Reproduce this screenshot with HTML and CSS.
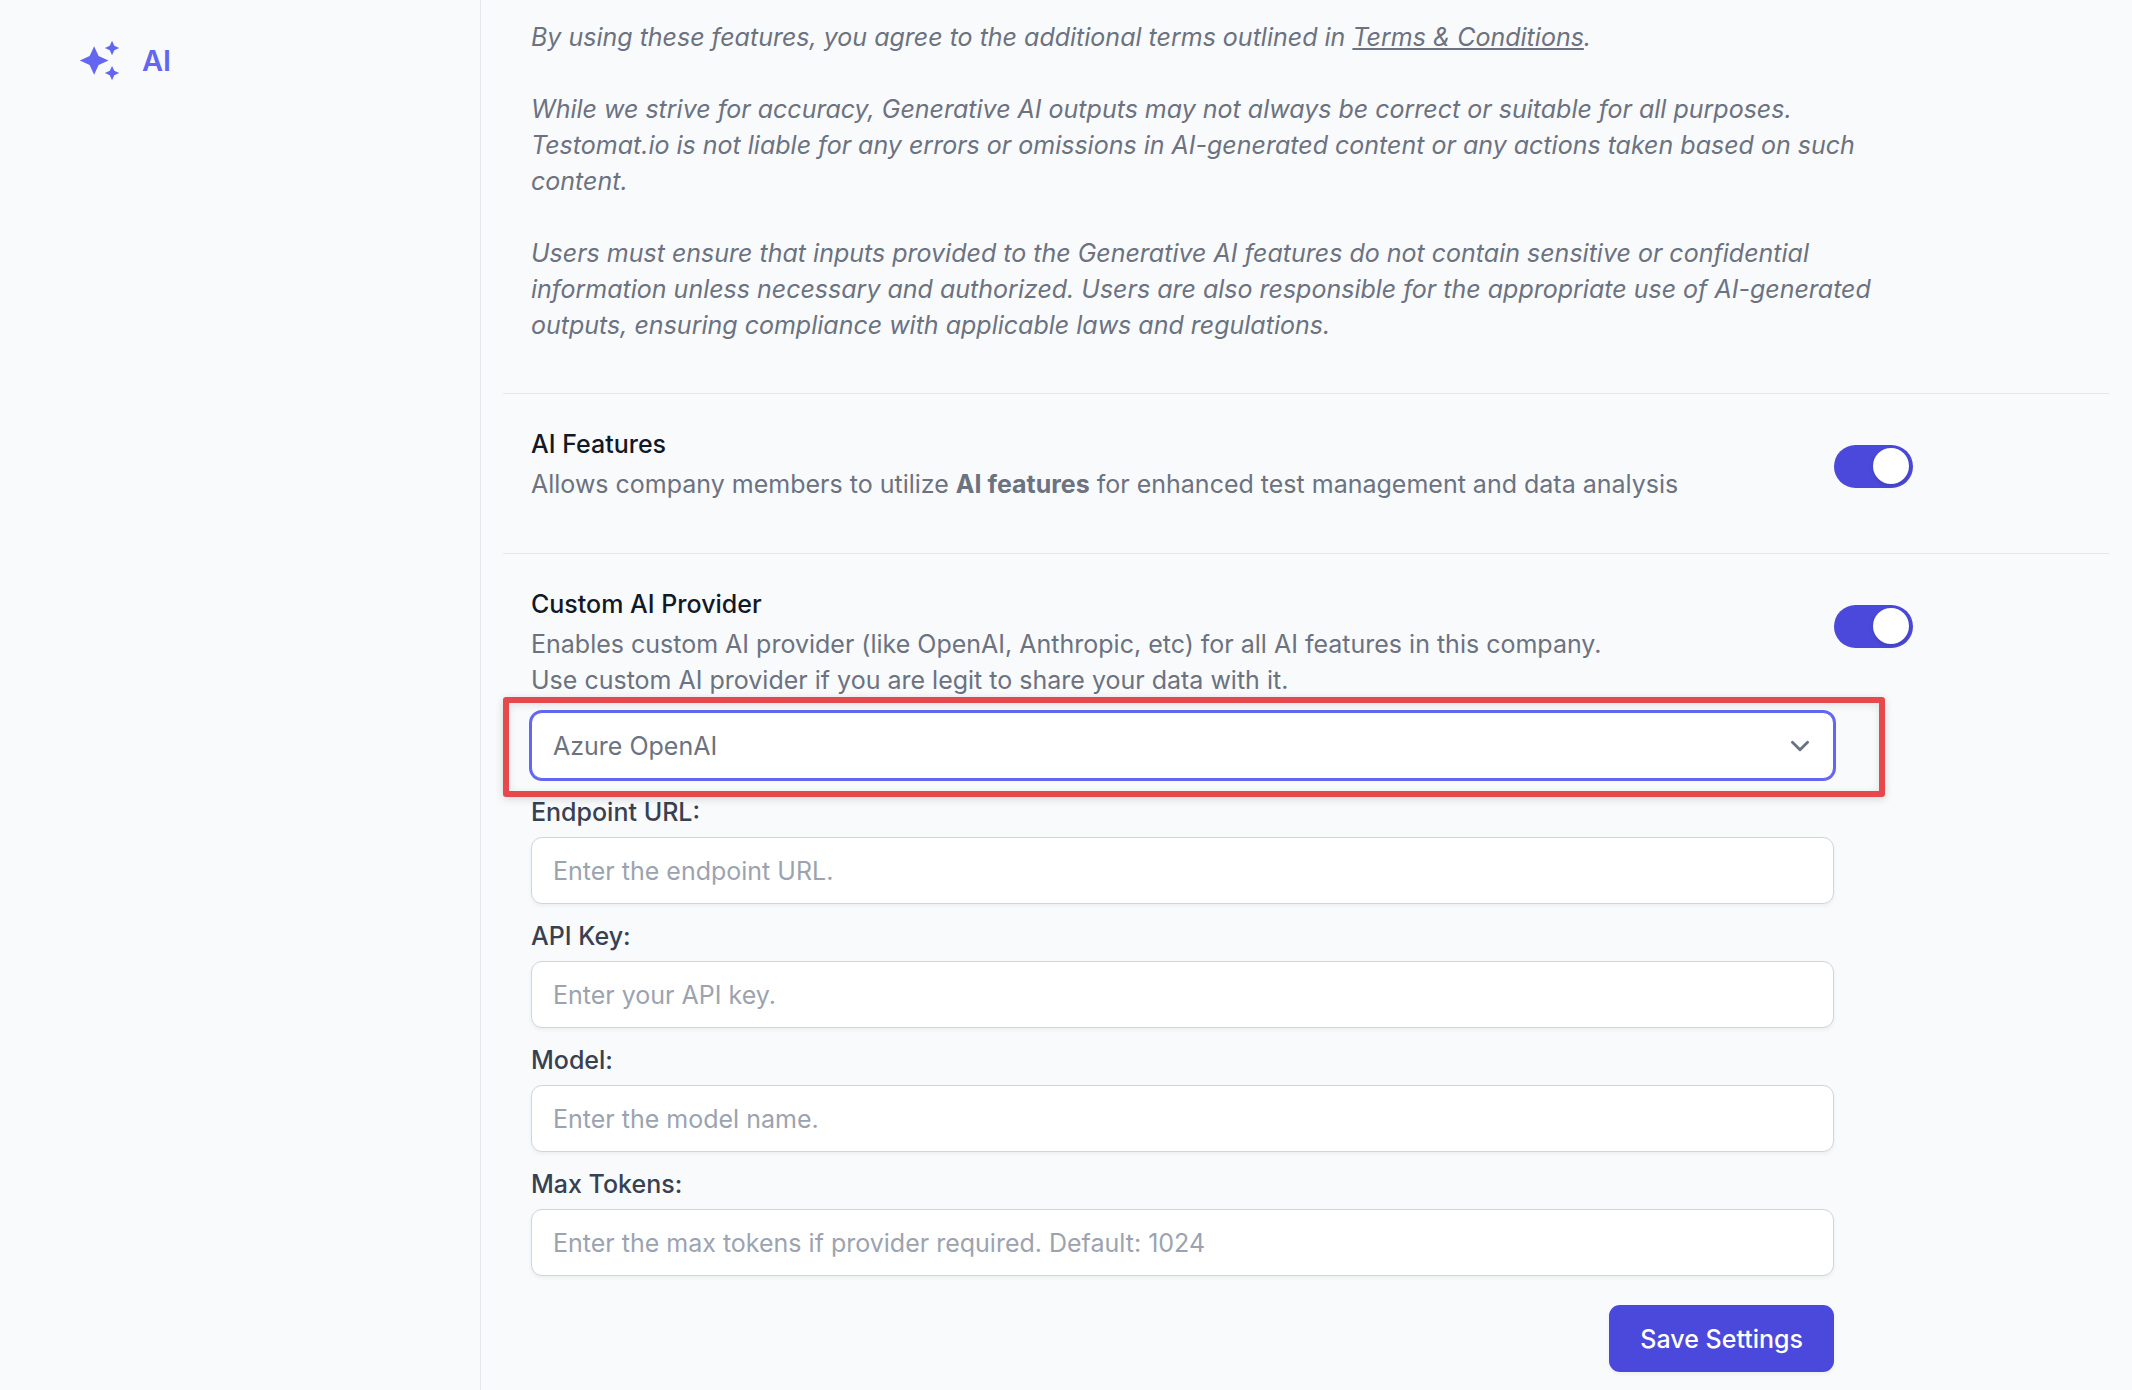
FILE: index.html
```html
<!DOCTYPE html>
<html lang="en">
<head>
    <meta charset="UTF-8">
    <meta name="viewport" content="width=device-width, initial-scale=1.0">
    <title>AI Settings</title>
    <link rel="stylesheet" href="styles.css">
</head>
<body>
    <div class="layout">
        <!-- Side menu -->
        <nav class="sidebar">
            <a href="#" class="nav-link">
                <svg class="nav-icon" viewBox="0 0 24 24" fill="currentColor" aria-hidden="true">
                    <path d="M19,1L17.74,3.75L15,5L17.74,6.26L19,9L20.25,6.26L23,5L20.25,3.75M9,4L6.5,9.5L1,12L6.5,14.5L9,20L11.5,14.5L17,12L11.5,9.5M19,15L17.74,17.74L15,19L17.74,20.25L19,23L20.25,20.25L23,19L20.25,17.74"/>
                </svg>
                <span>AI</span>
            </a>
        </nav>

        <main class="content">
            <section class="terms">
                <p>By using these features, you agree to the additional terms outlined in <a href="#">Terms &amp; Conditions</a>.</p>
                <p>While we strive for accuracy, Generative AI outputs may not always be correct or suitable for all purposes. Testomat.io is not liable for any errors or omissions in AI-generated content or any actions taken based on such content.</p>
                <p>Users must ensure that inputs provided to the Generative AI features do not contain sensitive or confidential information unless necessary and authorized. Users are also responsible for the appropriate use of AI-generated outputs, ensuring compliance with applicable laws and regulations.</p>
            </section>

            <section class="setting">
                <div class="setting-body">
                    <label class="setting-title" for="aiFeatures">AI Features</label>
                    <p>Allows company members to utilize <strong>AI features</strong> for enhanced test management and data analysis</p>
                </div>
                <input type="checkbox" class="toggle" id="aiFeatures" checked>
            </section>

            <section class="setting">
                <div class="setting-body">
                    <label class="setting-title" for="customProvider">Custom AI Provider</label>
                    <p>Enables custom AI provider (like OpenAI, Anthropic, etc) for all AI features in this company.<br>Use custom AI provider if you are legit to share your data with it.</p>

                    <form class="provider-form">
                        <div class="select-wrap">
                            <select id="provider" name="provider" aria-label="AI provider">
                                <option>Azure OpenAI</option>
                            </select>
                            <svg class="chevron" viewBox="0 0 20 20" fill="none" stroke="currentColor" aria-hidden="true">
                                <path d="M6 8l4 4 4-4" stroke-width="1.5" stroke-linecap="round" stroke-linejoin="round"/>
                            </svg>
                        </div>
                        <div class="form-group">
                            <label for="endpoint">Endpoint URL:</label>
                            <input type="text" id="endpoint" name="endpoint" placeholder="Enter the endpoint URL.">
                        </div>
                        <div class="form-group">
                            <label for="apiKey">API Key:</label>
                            <input type="text" id="apiKey" name="apiKey" placeholder="Enter your API key.">
                        </div>
                        <div class="form-group">
                            <label for="model">Model:</label>
                            <input type="text" id="model" name="model" placeholder="Enter the model name.">
                        </div>
                        <div class="form-group">
                            <label for="maxTokens">Max Tokens:</label>
                            <input type="text" id="maxTokens" name="maxTokens" placeholder="Enter the max tokens if provider required. Default: 1024">
                        </div>
                        <div class="button-container">
                            <button type="button">Save Settings</button>
                        </div>
                    </form>
                </div>
                <input type="checkbox" class="toggle" id="customProvider" checked>
            </section>
        </main>
    </div>
</body>
</html>
```
FILE: styles.css
```css
* {
    box-sizing: border-box;
}
body {
    margin: 0;
    font-family: Inter, sans-serif;
    font-size: 25px;
    line-height: 36px;
    color: #6b7280;
    background-color: #f9fafc;
}
p {
    margin: 0;
}
.layout {
    display: flex;
    min-height: 100vh;
}

/* Side menu */
.sidebar {
    flex: 0 0 481px;
    padding: 39px 78px;
    border-right: 1px solid #e5e7eb;
}
.nav-link {
    display: flex;
    align-items: center;
    gap: 21px;
    font-size: 29px;
    font-weight: 600;
    color: #6366f1;
    text-decoration: none;
}
.nav-icon {
    width: 43px;
    height: 43px;
}

/* Page content */
.content {
    flex: 1;
    min-width: 0;
    padding: 0 23px 0 22px;
}
.terms {
    display: flex;
    flex-direction: column;
    gap: 36px;
    padding: 19px 196px 50px 28px;
    font-style: italic;
}
.terms a {
    color: inherit;
}
.setting {
    display: flex;
    align-items: flex-start;
    padding: 32px 196px 51px 28px;
    border-top: 1px solid #e5e7eb;
}
.setting:last-child {
    padding-bottom: 18px;
}
.setting-body {
    flex: 1;
    min-width: 0;
}
.setting-title {
    display: block;
    margin-bottom: 4px;
    font-weight: 500;
    color: #111827;
}

/* Toggle switch */
.toggle {
    appearance: none;
    display: flex;
    justify-content: flex-end;
    flex-shrink: 0;
    width: 79px;
    height: 43px;
    margin: 19px 0 0;
    padding: 3px 4px;
    border-radius: 22px;
    background-color: #4b49db;
    cursor: pointer;
}
.toggle::before {
    content: "";
    width: 36px;
    height: 36px;
    border-radius: 50%;
    background-color: #fff;
    box-shadow: 0 2px 4px rgba(0, 0, 0, 0.15);
}
.toggle:not(:checked) {
    justify-content: flex-start;
    background-color: #e5e7eb;
}

/* Provider form */
.provider-form {
    margin-top: 14px;
}
.select-wrap {
    position: relative;
    margin-bottom: 15px;
}
/* red frame around the provider list */
.select-wrap::after {
    content: "";
    position: absolute;
    inset: -15px -51px -18px -28px;
    border: 6px solid #e5484d;
    border-radius: 3px;
    box-shadow: 0 2px 8px rgba(0, 0, 0, 0.15), inset 0 2px 8px rgba(0, 0, 0, 0.1);
    pointer-events: none;
}
select,
input[type="text"] {
    display: block;
    width: 100%;
    height: 67px;
    padding: 0 21px;
    border: 1px solid #d1d5db;
    border-radius: 11px;
    font: inherit;
    color: #6b7280;
    background-color: #fff;
    box-shadow: 0 2px 4px rgba(0, 0, 0, 0.05);
}
select {
    appearance: none;
    border-color: #6366f1;
    box-shadow: 0 0 0 2px #6366f1;
}
.chevron {
    position: absolute;
    top: 15px;
    right: 15px;
    width: 38px;
    height: 38px;
    pointer-events: none;
}
.form-group {
    margin-bottom: 14px;
}
.form-group label {
    display: block;
    margin-bottom: 7px;
    font-weight: 500;
    color: #374151;
}
input::placeholder {
    color: #9ca3af;
    opacity: 1;
}
.button-container {
    padding-top: 15px;
    text-align: right;
}
button {
    height: 67px;
    padding: 0 31px;
    border: none;
    border-radius: 11px;
    font: inherit;
    font-weight: 500;
    color: #fff;
    background-color: #4b49db;
    box-shadow: 0 2px 4px rgba(0, 0, 0, 0.05);
    cursor: pointer;
}
button:hover {
    background-color: #4338ca;
}
```
